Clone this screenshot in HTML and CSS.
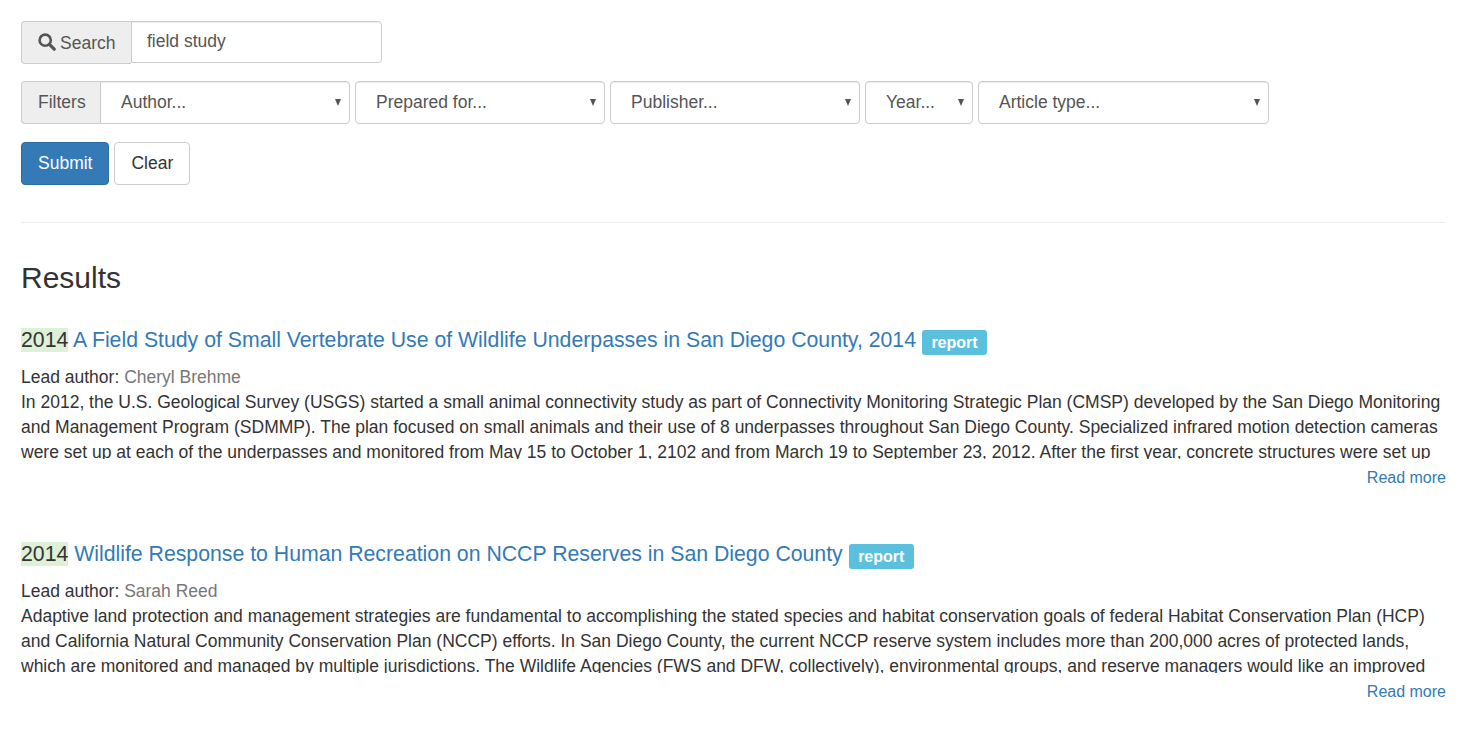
FILE: index.html
```html
<!DOCTYPE html>
<html lang="en">
  <head>
    <meta charset="UTF-8" />
    <title>Search</title>
    <link rel="stylesheet" href="styles.css">
  </head>
  <body>
    <div class="wrapper">
      <form class="search-form">
        <div class="search-row">
          <span class="addon addon-search">
            <svg class="search-icon" viewBox="0 0 18 18" width="18" height="18" aria-hidden="true">
              <circle cx="7.2" cy="7.2" r="5.6" fill="none" stroke="#555" stroke-width="2.6" />
              <path d="M11.4 11.4l4.8 4.8" fill="none" stroke="#555" stroke-width="3.2" stroke-linecap="round" />
            </svg>
            Search
          </span>
          <input class="search-input" type="text" value="field study" />
        </div>
        <div class="filter-row">
          <span class="addon addon-filter">Filters</span>
          <div class="select select-author joined">
            <select><option>Author...</option></select>
          </div>
          <div class="select select-wide">
            <select><option>Prepared for...</option></select>
          </div>
          <div class="select select-wide">
            <select><option>Publisher...</option></select>
          </div>
          <div class="select select-year">
            <select><option>Year...</option></select>
          </div>
          <div class="select select-type">
            <select><option>Article type...</option></select>
          </div>
        </div>
        <div class="button-row">
          <button class="btn btn-primary" type="button">Submit</button>
          <button class="btn" type="button">Clear</button>
        </div>
      </form>
      <hr />
      <h2>Results</h2>
      <div class="result">
        <h4 class="result-title">
          <mark>2014</mark>
          <a href="#">A Field Study of Small Vertebrate Use of Wildlife Underpasses in San Diego County, 2014</a>
          <span class="label">report</span>
        </h4>
        <div class="author">Lead author: <span class="author-name">Cheryl Brehme</span></div>
        <div class="abstract">
          In 2012, the U.S. Geological Survey (USGS) started a small animal connectivity study as part of Connectivity Monitoring Strategic Plan (CMSP) developed by the San Diego Monitoring and Management Program (SDMMP). The plan focused on small animals and their use of 8 underpasses throughout San Diego County. Specialized infrared motion detection cameras were set up at each of the underpasses and monitored from May 15 to October 1, 2102 and from March 19 to September 23, 2012. After the first year, concrete structures were set up
        </div>
        <div class="more"><a href="#">Read more</a></div>
      </div>
      <div class="result">
        <h4 class="result-title">
          <mark>2014</mark>
          <a href="#">Wildlife Response to Human Recreation on NCCP Reserves in San Diego County</a>
          <span class="label">report</span>
        </h4>
        <div class="author">Lead author: <span class="author-name">Sarah Reed</span></div>
        <div class="abstract">
          Adaptive land protection and management strategies are fundamental to accomplishing the stated species and habitat conservation goals of federal Habitat Conservation Plan (HCP) and California Natural Community Conservation Plan (NCCP) efforts. In San Diego County, the current NCCP reserve system includes more than 200,000 acres of protected lands, which are monitored and managed by multiple jurisdictions. The Wildlife Agencies (FWS and DFW, collectively), environmental groups, and reserve managers would like an improved
        </div>
        <div class="more"><a href="#">Read more</a></div>
      </div>
    </div>
  </body>
</html>
```

FILE: styles.css
```css
html,
body {
  margin: 0;
  padding: 0;
  font-size: 17.5px;
  font-family: 'Liberation Sans', Arial, sans-serif;
  color: #333;
  background: #fff;
}
a {
  text-decoration: none;
  color: #337ab7;
}
.wrapper {
  padding: 21px 21px 0;
  line-height: 25px;
}
.search-row {
  display: flex;
  align-items: flex-start;
}
.addon {
  display: flex;
  align-items: center;
  box-sizing: border-box;
  height: 43px;
  background: #eee;
  border: 1px solid #ccc;
  border-right: 0;
  border-radius: 4px 0 0 4px;
  color: #555;
}
.addon-search {
  width: 110px;
  padding: 1px 0 0 16px;
}
.search-icon {
  flex-shrink: 0;
  margin-right: 4px;
  margin-top: -2px;
}
.search-input {
  box-sizing: border-box;
  width: 251px;
  height: 42px;
  padding: 0 15px 2px;
  border: 1px solid #ccc;
  border-radius: 0 4px 4px 0;
  font: inherit;
  color: #555;
  box-shadow: inset 0 1px 1px rgba(0, 0, 0, 0.075);
}
.filter-row {
  display: flex;
  gap: 5px;
  margin-top: 17px;
}
.addon-filter {
  width: 79px;
  height: 43px;
  padding-left: 16px;
  margin-right: -5px;
}
.select {
  position: relative;
  box-sizing: border-box;
  height: 43px;
}
.select::after {
  content: '';
  position: absolute;
  right: 9px;
  top: 18px;
  border-left: 3.5px solid transparent;
  border-right: 3.5px solid transparent;
  border-top: 7px solid #555;
}
.select select {
  appearance: none;
  box-sizing: border-box;
  width: 100%;
  height: 43px;
  padding: 0 20px 1px;
  background: #fff;
  border: 1px solid #ccc;
  border-radius: 4px;
  font: inherit;
  color: #555;
  box-shadow: inset 0 1px 1px rgba(0, 0, 0, 0.075);
}
.joined select {
  border-radius: 0 4px 4px 0;
}
.select-author {
  width: 250px;
}
.select-wide {
  width: 250px;
}
.select-year {
  width: 108px;
}
.select-type {
  width: 291px;
}
.button-row {
  display: flex;
  gap: 5px;
  margin-top: 18px;
}
.btn {
  box-sizing: border-box;
  height: 43px;
  padding: 0 16px;
  background: #fff;
  border: 1px solid #ccc;
  border-radius: 4px;
  font: inherit;
  color: #333;
}
.btn-primary {
  background: #337ab7;
  border-color: #2e6da4;
  color: #fff;
}
hr {
  margin: 37px 0 0;
  border: 0;
  border-top: 1px solid #eee;
}
h2 {
  margin: 37px 0 0;
  font-size: 30px;
  font-weight: 500;
  line-height: 36px;
}
.result {
  margin-top: 31px;
  height: 183px;
}
.result-title {
  margin: 0 0 10px;
  font-size: 21.25px;
  font-weight: 500;
  line-height: 26px;
}
mark {
  background: #dff0d8;
  color: #333;
}
.label {
  display: inline-block;
  padding: 0 9.5px;
  background: #5bc0de;
  border-radius: 3px;
  color: #fff;
  font-size: 16px;
  font-weight: bold;
  line-height: 25px;
  vertical-align: -1px;
}
.author-name {
  color: #777;
}
.abstract {
  height: 69px;
  overflow: hidden;
}
.more {
  margin-top: 6px;
  font-size: 16px;
  text-align: right;
}
```
